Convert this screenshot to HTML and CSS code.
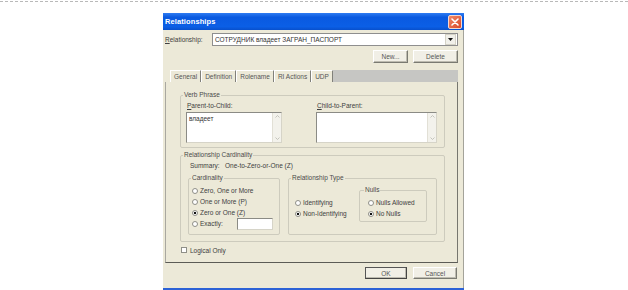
FILE: index.html
```html
<!DOCTYPE html>
<html>
<head>
	<meta charset="utf-8">
	<title>Relationships</title>
	<link rel="stylesheet" href="styles.css">
</head>
<body>
<div class="page">
	<div class="dash"></div>
	<div class="dialog">
		<div class="titlebar">
			<span class="title">Relationships</span>
			<span class="close">
				<svg width="8" height="8" viewBox="0 0 8 8"><path d="M1 1L7 7M7 1L1 7" stroke="#fff" stroke-width="1.6" stroke-linecap="round"/></svg>
			</span>
		</div>
		<div class="body">
			<div class="rel_row">
				<span class="rel_label"><u>R</u>elationship:</span>
				<div class="combo">
					<span class="combo_text">СОТРУДНИК владеет ЗАГРАН_ПАСПОРТ</span>
					<span class="combo_btn"><svg width="5" height="3" viewBox="0 0 5 3"><path d="M0 0H5L2.5 3Z" fill="#111"/></svg></span>
				</div>
			</div>
			<div class="btn_row">
				<span class="btn btn_new">New...</span>
				<span class="btn btn_delete">Delete</span>
			</div>

			<div class="tabs">
				<span class="tab">General</span>
				<span class="tab">Definition</span>
				<span class="tab">Rolename</span>
				<span class="tab">RI Actions</span>
				<span class="tab">UDP</span>
				<span class="tab_fill"></span>
			</div>

			<div class="panel">
				<fieldset class="group verb">
					<legend>Verb Phrase</legend>
					<div class="verb_body">
						<div class="verb_col">
							<div class="cap"><u>P</u>arent-to-Child:</div>
							<div class="memo memo_left">
								<span class="memo_text">владеет</span>
								<span class="scroll">
									<svg width="5" height="3" viewBox="0 0 5 3"><path d="M0.5 2.5L2.5 0.5L4.5 2.5" fill="none" stroke="#b8b8b0" stroke-width="0.8"/></svg>
									<svg width="5" height="3" viewBox="0 0 5 3"><path d="M0.5 0.5L2.5 2.5L4.5 0.5" fill="none" stroke="#b8b8b0" stroke-width="0.8"/></svg>
								</span>
							</div>
						</div>
						<div class="verb_col">
							<div class="cap"><u>C</u>hild-to-Parent:</div>
							<div class="memo memo_right">
								<span class="memo_text"></span>
								<span class="scroll">
									<svg width="5" height="3" viewBox="0 0 5 3"><path d="M0.5 2.5L2.5 0.5L4.5 2.5" fill="none" stroke="#b8b8b0" stroke-width="0.8"/></svg>
									<svg width="5" height="3" viewBox="0 0 5 3"><path d="M0.5 0.5L2.5 2.5L4.5 0.5" fill="none" stroke="#b8b8b0" stroke-width="0.8"/></svg>
								</span>
							</div>
						</div>
					</div>
				</fieldset>

				<fieldset class="group card">
					<legend>Relationship Cardinality</legend>
					<div class="summary">
						<span class="summary_label">Summary:</span>
						<span>One-to-Zero-or-One (Z)</span>
					</div>
					<div class="sub_row">
						<fieldset class="group cardinality">
							<legend>Cardinality</legend>
							<div class="opts opts_card">
								<div class="opt"><span class="radio"></span>Zero, One or More</div>
								<div class="opt"><span class="radio"></span>One or More (P)</div>
								<div class="opt"><span class="radio on"></span>Zero or One (Z)</div>
								<div class="opt"><span class="radio"></span><span class="exact_label">Exactly:</span><span class="exact_box"></span></div>
							</div>
						</fieldset>
						<fieldset class="group reltype">
							<legend>Relationship Type</legend>
							<div class="reltype_body">
								<div class="opts opts_type">
									<div class="opt"><span class="radio"></span>Identifying</div>
									<div class="opt"><span class="radio on"></span>Non-Identifying</div>
								</div>
								<fieldset class="group nulls">
									<legend>Nulls</legend>
									<div class="opts opts_nulls">
										<div class="opt"><span class="radio"></span>Nulls Allowed</div>
										<div class="opt"><span class="radio on"></span>No Nulls</div>
									</div>
								</fieldset>
							</div>
						</fieldset>
					</div>
				</fieldset>

				<div class="logical"><span class="checkbox"></span>Logical Only</div>
			</div>

			<div class="footer">
				<span class="btn btn_ok">OK</span>
				<span class="btn btn_cancel">Cancel</span>
			</div>
		</div>
		<div class="bottom_strip"></div>
	</div>
</div>
</body>
</html>
```

FILE: styles.css
```css
body {
	margin: 0;
	background-color: #fff;
	font-family: "Liberation Sans", Arial, sans-serif;
	font-size: 6.5px;
	color: #404040;
}
.page {
	width: 628px;
	height: 290px;
	padding-top: 1px;
	box-sizing: border-box;
	overflow: hidden;
}
.dash {
	border-top: 1px dashed #b9b9b9;
}
.dialog {
	margin: 11px 0 0 163px;
	width: 301px;
}

/* title bar */
.titlebar {
	display: flex;
	align-items: center;
	justify-content: space-between;
	height: 17px;
	padding: 0 2px 0 2px;
	background: linear-gradient(#2f7cf2, #0a5ae0 25%, #0b5fe6 80%, #0850cc);
}
.titlebar .title {
	font-size: 7.5px;
	font-weight: bold;
	color: #fff;
	letter-spacing: 0.1px;
}
.titlebar .close {
	display: flex;
	align-items: center;
	justify-content: center;
	width: 14px;
	height: 14px;
	box-sizing: border-box;
	border: 1px solid #f4d8d0;
	border-radius: 2px;
	background: linear-gradient(135deg, #f08a68, #d9482a);
}

/* body */
.body {
	box-sizing: border-box;
	padding: 3px 5px 9px 2px;
	background-color: #ece9d8;
	border-right: 1px solid #a4a39a;
}
.rel_row {
	display: flex;
	align-items: center;
	height: 13px;
}
.rel_label {
	width: 47px;
}
.combo {
	display: flex;
	align-items: center;
	width: 246px;
	height: 13px;
	box-sizing: border-box;
	border: 1px solid #8e8e8e;
	background-color: #fff;
}
.combo_text {
	flex: 1;
	padding-left: 2px;
	color: #333;
}
.combo_btn {
	display: flex;
	align-items: center;
	justify-content: center;
	width: 9px;
	height: 9px;
	margin-right: 1px;
	background-color: #f1f0ea;
	border: 1px solid #d4d2c6;
}
.btn_row {
	display: flex;
	justify-content: flex-end;
	gap: 5px;
	margin-top: 4px;
}
.btn {
	display: flex;
	align-items: center;
	justify-content: center;
	height: 13px;
	box-sizing: border-box;
	border: 1px solid;
	border-color: #fff #7a7a72 #7a7a72 #fff;
	box-shadow: inset -1px -1px #bdbbb0;
	background-color: #f1efe6;
	color: #555;
}
.btn_new { width: 35px; }
.btn_delete { width: 45px; }

/* tabs */
.tabs {
	display: flex;
	height: 12px;
	margin-top: 7px;
	padding-left: 5px;
}
.tab {
	display: flex;
	align-items: center;
	padding: 0 3px;
	box-sizing: border-box;
	border-left: 1px solid #fff;
	border-right: 1px solid #80807a;
	border-top: 1px solid #fff;
	color: #555;
}
.tab_fill {
	flex: 1;
	background-color: #c6c6c3;
}

/* tab panel */
.panel {
	height: 181px;
	box-sizing: border-box;
	padding: 9px 0 0 14px;
	border-left: 1px solid #a9a8a0;
	border-right: 1px solid #77776f;
	border-bottom: 1px solid #5c5c56;
}
.group {
	margin: 0;
	padding: 0;
	min-width: 0;
	box-sizing: border-box;
	border: 1px solid #cdcbbd;
	border-radius: 2px;
}
.group > legend {
	margin-left: 2px;
	padding: 0 1px;
	line-height: 8px;
	color: #4a4a4a;
}
.verb {
	width: 265px;
	height: 57px;
}
.verb_body {
	display: flex;
	gap: 34px;
	padding: 3px 0 0 5px;
}
.cap {
	height: 8px;
	line-height: 8px;
	margin: 0 0 2px 1px;
}
.memo {
	display: flex;
	height: 31px;
	box-sizing: border-box;
	border: 1px solid #8b8b85;
	border-right-color: #d6d4c8;
	border-bottom-color: #d6d4c8;
	background-color: #fff;
}
.memo_left { width: 96px; }
.memo_right { width: 121px; }
.memo_text {
	flex: 1;
	padding: 2px 0 0 2px;
	line-height: 7px;
	color: #333;
}
.scroll {
	display: flex;
	flex-direction: column;
	justify-content: space-between;
	align-items: center;
	width: 9px;
	padding: 2px 0;
	box-sizing: border-box;
	background-color: #f3f2ec;
	border-left: 1px solid #e2e0d6;
}

.card {
	width: 265px;
	height: 91px;
	margin-top: 3px;
}
.summary {
	display: flex;
	height: 8px;
	line-height: 8px;
	padding: 3px 0 0 9px;
}
.summary_label {
	width: 35px;
}
.sub_row {
	display: flex;
	gap: 8px;
	margin-top: 4px;
	padding-left: 7px;
}
.cardinality {
	width: 92px;
	height: 61px;
}
.reltype {
	width: 149px;
	height: 61px;
}
.opt {
	display: flex;
	align-items: center;
	height: 11px;
}
.radio {
	width: 6px;
	height: 6px;
	margin-right: 2px;
	box-sizing: border-box;
	border: 1px solid #8f8f88;
	border-radius: 50%;
	background-color: #fff;
}
.radio.on {
	background: radial-gradient(circle, #111 1.1px, #fff 1.6px);
}
.opts_card {
	padding: 3px 0 0 3px;
}
.exact_label {
	width: 37px;
}
.exact_box {
	width: 36px;
	height: 12px;
	box-sizing: border-box;
	border: 1px solid #8b8b85;
	border-right-color: #d6d4c8;
	border-bottom-color: #d6d4c8;
	background-color: #fff;
}
.reltype_body {
	display: flex;
}
.opts_type {
	padding: 15px 0 0 6px;
}
.nulls {
	width: 68px;
	height: 36px;
	margin: 4px 9px 0 auto;
}
.nulls > legend {
	margin-left: 4px;
}
.opts_nulls {
	padding: 3px 0 0 8px;
}
.logical {
	display: flex;
	align-items: center;
	height: 8px;
	margin: 4px 0 0 1px;
}
.checkbox {
	width: 6px;
	height: 6px;
	margin-right: 3px;
	box-sizing: border-box;
	border: 1px solid #8f8f88;
	background-color: #fff;
}

/* footer */
.footer {
	display: flex;
	justify-content: flex-end;
	gap: 6px;
	margin-top: 4px;
	padding-right: 1px;
}
.footer .btn {
	height: 12px;
}
.btn_ok {
	width: 42px;
	border-color: #555 #444 #444 #555 !important;
}
.btn_cancel { width: 44px; }
.bottom_strip {
	height: 2px;
	background-color: #2c62d6;
}
```
